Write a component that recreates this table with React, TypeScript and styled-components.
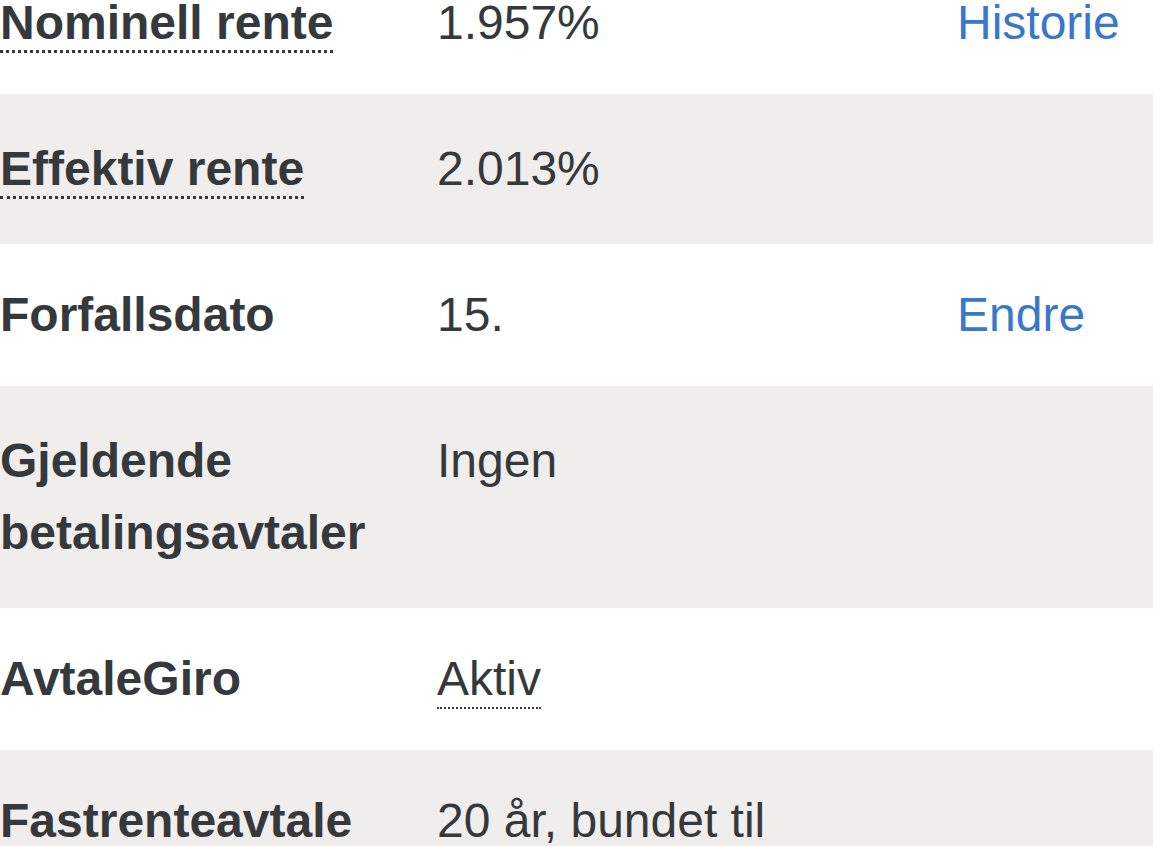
import React from "react";
import styled, { createGlobalStyle } from "styled-components";

const Global = createGlobalStyle`
  html, body { margin: 0; padding: 0; background: #ffffff; overflow: hidden; }
  body { font-family: "Liberation Sans", Arial, Helvetica, sans-serif; }
`;

const List = styled.dl`
  margin: -48px 0 0 0;
  padding: 0;
  color: #36393c;
  font-size: 48px;
  line-height: 72px;
`;

const Row = styled.div<{ $shaded?: boolean; $pad?: number }>`
  display: grid;
  grid-template-columns: 437px 520px 1fr;
  align-items: start;
  padding: ${(p) => p.$pad ?? 35}px 0;
  background: ${(p) => (p.$shaded ? "#efeeed" : "#ffffff")};
`;

const Label = styled.dt`
  margin: 0;
  font-weight: 700;
  padding-right: 24px;
`;

const Value = styled.dd`
  margin: 0;
  font-weight: 400;
  padding-right: 24px;
`;

const Abbr = styled.abbr`
  text-decoration: none;
  border-bottom: 3px dotted #36393c;
  padding-bottom: 1px;
  cursor: help;
`;

const Dotted = styled.span`
  border-bottom: 2px dotted #36393c;
  padding-bottom: 2px;
`;

const Action = styled.a`
  color: #3a77c9;
  text-decoration: none;
  font-weight: 400;
`;

const Empty = styled.span``;

export default function App() {
  return (
    <>
      <Global />
      <List>
        <Row>
          <Label>
            <Abbr title="Nominell rente">Nominell rente</Abbr>
          </Label>
          <Value>1.957%</Value>
          <Action href="#">Historie</Action>
        </Row>
        <Row $shaded $pad={39}>
          <Label>
            <Abbr title="Effektiv rente">Effektiv rente</Abbr>
          </Label>
          <Value>2.013%</Value>
          <Empty />
        </Row>
        <Row>
          <Label>Forfallsdato</Label>
          <Value>15.</Value>
          <Action href="#">Endre</Action>
        </Row>
        <Row $shaded $pad={39}>
          <Label>Gjeldende betalingsavtaler</Label>
          <Value>Ingen</Value>
          <Empty />
        </Row>
        <Row>
          <Label>AvtaleGiro</Label>
          <Value>
            <Dotted>Aktiv</Dotted>
          </Value>
          <Empty />
        </Row>
        <Row $shaded>
          <Label>Fastrenteavtale</Label>
          <Value>20 år, bundet til 15.05.2040</Value>
          <Empty />
        </Row>
      </List>
    </>
  );
}
